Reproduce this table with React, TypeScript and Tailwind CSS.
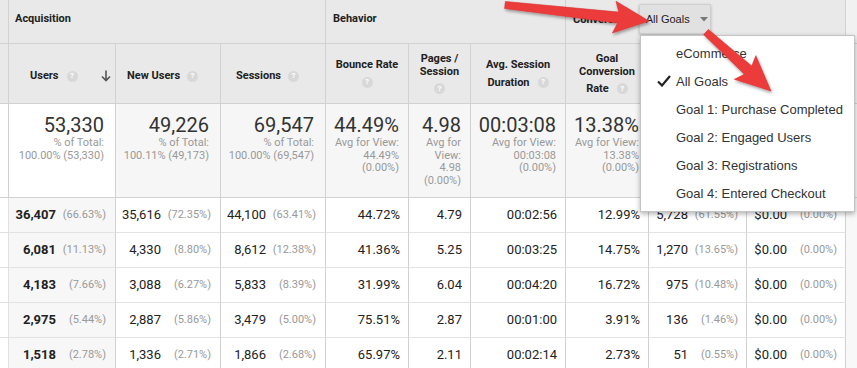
import React from "react";

const COLS =
  "grid grid-cols-[9px_107px_105px_105px_83px_62px_95px_83px_98px_99px_11px]";
const B = "border-[#d2d2d2]";

function Q() {
  return (
    <span className="inline-flex h-[11px] w-[11px] items-center justify-center rounded-full bg-[#d8d8d8] text-[8px] font-bold leading-none text-white">
      ?
    </span>
  );
}

function SortArrow() {
  return (
    <svg width="10" height="12" viewBox="0 0 10 12">
      <path d="M5 0.5 V10.5 M1 6.5 L5 10.5 L9 6.5" fill="none" stroke="#555" strokeWidth="1.6" />
    </svg>
  );
}

function arrowPoints(
  x1: number,
  y1: number,
  x2: number,
  y2: number,
  tw: number,
  sw: number,
  hl: number,
  hh: number
) {
  const L = Math.hypot(x2 - x1, y2 - y1);
  const a = Math.atan2(y2 - y1, x2 - x1);
  const c = Math.cos(a);
  const s = Math.sin(a);
  const pts: [number, number][] = [
    [0, -tw / 2],
    [L - hl, -sw / 2],
    [L - hl - 4, -hh],
    [L, 0],
    [L - hl - 4, hh],
    [L - hl, sw / 2],
    [0, tw / 2],
  ];
  return pts.map(([u, v]) => `${x1 + u * c - v * s},${y1 + u * s + v * c}`).join(" ");
}

type Tot = { big: string; sub: string[] };
const totals: Tot[] = [
  { big: "53,330", sub: ["% of Total:", "100.00% (53,330)"] },
  { big: "49,226", sub: ["% of Total:", "100.11% (49,173)"] },
  { big: "69,547", sub: ["% of Total:", "100.00% (69,547)"] },
  { big: "44.49%", sub: ["Avg for View:", "44.49%", "(0.00%)"] },
  { big: "4.98", sub: ["Avg for", "View:", "4.98", "(0.00%)"] },
  { big: "00:03:08", sub: ["Avg for View:", "00:03:08", "(0.00%)"] },
  { big: "13.38%", sub: ["Avg for View:", "13.38%", "(0.00%)"] },
  { big: "9,306", sub: ["% of Total:", "100.00% (9,306)"] },
  { big: "$0.00", sub: ["% of Total:", "0.00% ($0.00)"] },
];

const rows: (string | [string, string])[][] = [
  [["36,407", "(66.63%)"], ["35,616", "(72.35%)"], ["44,100", "(63.41%)"], "44.72%", "4.79", "00:02:56", "12.99%", ["5,728", "(61.55%)"], ["$0.00", "(0.00%)"]],
  [["6,081", "(11.13%)"], ["4,330", "(8.80%)"], ["8,612", "(12.38%)"], "41.36%", "5.25", "00:03:25", "14.75%", ["1,270", "(13.65%)"], ["$0.00", "(0.00%)"]],
  [["4,183", "(7.66%)"], ["3,088", "(6.27%)"], ["5,833", "(8.39%)"], "31.99%", "6.04", "00:04:20", "16.72%", ["975", "(10.48%)"], ["$0.00", "(0.00%)"]],
  [["2,975", "(5.44%)"], ["2,887", "(5.86%)"], ["3,479", "(5.00%)"], "75.51%", "2.87", "00:01:00", "3.91%", ["136", "(1.46%)"], ["$0.00", "(0.00%)"]],
  [["1,518", "(2.78%)"], ["1,336", "(2.71%)"], ["1,866", "(2.68%)"], "65.97%", "2.11", "00:02:14", "2.73%", ["51", "(0.55%)"], ["$0.00", "(0.00%)"]],
];

const menuItems = [
  { label: "eCommerce", checked: false },
  { label: "All Goals", checked: true },
  { label: "Goal 1: Purchase Completed", checked: false },
  { label: "Goal 2: Engaged Users", checked: false },
  { label: "Goal 3: Registrations", checked: false },
  { label: "Goal 4: Entered Checkout", checked: false },
];

function HeadStack({ lines, last }: { lines: string[]; last?: string }) {
  return (
    <div className={`flex flex-col items-center justify-center border-r border-b ${B} bg-[#e9e9e9] text-center`}>
      {lines.map((l) => (
        <div key={l} className="leading-[13px]">
          {l}
        </div>
      ))}
      <div className="mt-[4px] flex h-[14px] items-center gap-[8px]">
        {last && <span className="leading-[13px]">{last}</span>}
        <Q />
      </div>
    </div>
  );
}

export default function App() {
  return (
    <div className="relative h-[368px] w-[857px] overflow-hidden bg-white font-['Roboto',sans-serif] text-[#222]">
      {/* Group header row */}
      <div className="grid h-[44px] grid-cols-[9px_317px_240px_280px_11px] bg-[#e9e9e9] text-[11px] font-bold">
        <div className={`border-r border-b ${B}`} />
        <div className={`border-r border-b ${B} pl-[6px] pt-[12px] leading-[14px]`}>Acquisition</div>
        <div className={`border-r border-b ${B} pl-[7px] pt-[12px] leading-[14px]`}>Behavior</div>
        <div className={`relative flex items-center border-r border-b ${B} pb-[3px] pl-[7px]`}>
          <span className="leading-[14px]">Conversions</span>
          <div className="ml-[4px] mb-[2px] flex h-[30px] w-[72px] items-center rounded-[2px] border border-[#cfcfcf] bg-[#e1e1e1] pl-[6px] font-['Liberation_Sans',Arial,sans-serif] text-[11px] font-normal text-[#222] shadow-[0_1px_3px_rgba(0,0,0,0.25)]">
            All Goals
            <svg className="ml-[10px]" width="8" height="5" viewBox="0 0 8 5">
              <path d="M0 0 H8 L4 4.5 Z" fill="#777" />
            </svg>
          </div>
        </div>
        <div className={`border-b ${B} bg-[#f1f1f1]`} />
      </div>

      {/* Column header row */}
      <div className={`${COLS} h-[60px] bg-[#e9e9e9] text-[11px] font-bold`}>
        <div className={`border-r border-b ${B}`} />
        <div className={`flex items-center gap-[8px] border-r border-b ${B} pt-[5px] pl-[21px] pr-[4px]`}>
          <span>Users</span>
          <Q />
          <span className="ml-auto flex">
            <SortArrow />
          </span>
        </div>
        <div className={`flex items-center gap-[7px] border-r border-b ${B} pt-[5px] pl-[11px]`}>
          <span>New Users</span>
          <Q />
        </div>
        <div className={`flex items-center gap-[7px] border-r border-b ${B} pt-[5px] pl-[15px]`}>
          <span>Sessions</span>
          <Q />
        </div>
        <HeadStack lines={["Bounce Rate"]} />
        <HeadStack lines={["Pages /", "Session"]} />
        <HeadStack lines={["Avg. Session"]} last="Duration" />
        <HeadStack lines={["Goal", "Conversion"]} last="Rate" />
        <HeadStack lines={["Goal", "Completions"]} />
        <HeadStack lines={["Goal Value"]} />
        <div className={`border-b ${B} bg-[#f1f1f1]`} />
      </div>

      {/* Totals row */}
      <div className={`${COLS} h-[94px]`}>
        <div className={`border-r border-b ${B} bg-white`} />
        {totals.map((t, i) => (
          <div
            key={i}
            className={`flex flex-col items-end border-r border-b ${B} pt-[9px] ${i < 3 ? "pr-[11px]" : "pr-[9px]"} ${i === 0 ? "bg-white" : "bg-[#f6f6f6]"}`}
          >
            <div className="text-[20px] leading-[24px] text-[#333]">{t.big}</div>
            <div className="text-right text-[11px] leading-[12.5px] whitespace-nowrap text-[#999]">
              {t.sub.map((s, j) => (
                <div key={j}>{s}</div>
              ))}
            </div>
          </div>
        ))}
        <div className={`border-b ${B} bg-[#f7f7f7]`} />
      </div>

      {/* Data rows */}
      {rows.map((r, ri) => (
        <div key={ri} className={`${COLS} h-[35px] text-[13px]`}>
          <div className={`border-r border-b border-[#e0e0e0] bg-white`} />
          {r.map((c, ci) => (
            <div
              key={ci}
              className={`flex items-center justify-end border-r border-b ${B} border-b-[#e3e3e3] ${ci < 3 ? "pr-[9px]" : "pr-[8px]"} ${ci === 0 ? "bg-[#f7f7f7] font-bold" : "bg-white"}`}
            >
              {Array.isArray(c) ? (
                <>
                  <span>{c[0]}</span>
                  <span className="w-[50px] text-right text-[11px] font-normal text-[#999]">{c[1]}</span>
                </>
              ) : (
                <span>{c}</span>
              )}
            </div>
          ))}
          <div className="bg-[#f7f8f7]" />
        </div>
      ))}

      {/* Dropdown menu */}
      <div className="absolute top-[35px] left-[640px] w-[215px] border border-[#c4c4c4] bg-white pt-[3px] pb-[4px] font-['Liberation_Sans',Arial,sans-serif] text-[13px] text-[#333] shadow-[0_2px_5px_rgba(0,0,0,0.3)]">
        {menuItems.map((m) => (
          <div key={m.label} className="relative flex h-[28px] items-center pl-[35px] leading-none">
            {m.checked && (
              <svg className="absolute top-[8px] left-[16px]" width="14" height="12" viewBox="0 0 14 12">
                <path d="M1 6.5 L5 10.5 L13 1" fill="none" stroke="#222" strokeWidth="2.2" />
              </svg>
            )}
            {m.label}
          </div>
        ))}
      </div>

      {/* Red annotation arrows */}
      <svg className="pointer-events-none absolute top-0 left-0" width="857" height="368" viewBox="0 0 857 368">
        <defs>
          <filter id="sh" x="-20%" y="-20%" width="140%" height="140%">
            <feDropShadow dx="1" dy="2" stdDeviation="1.5" floodColor="#000" floodOpacity="0.35" />
          </filter>
        </defs>
        <polygon
          points={arrowPoints(505, 5, 649, 21, 7, 11, 31, 16)}
          fill="#ec3b3b"
          stroke="#d83030"
          strokeWidth="0.6"
          filter="url(#sh)"
        />
        <polygon
          points={arrowPoints(706, 32, 771, 91, 7, 11, 31, 16)}
          fill="#ec3b3b"
          stroke="#d83030"
          strokeWidth="0.6"
          filter="url(#sh)"
        />
      </svg>
    </div>
  );
}
